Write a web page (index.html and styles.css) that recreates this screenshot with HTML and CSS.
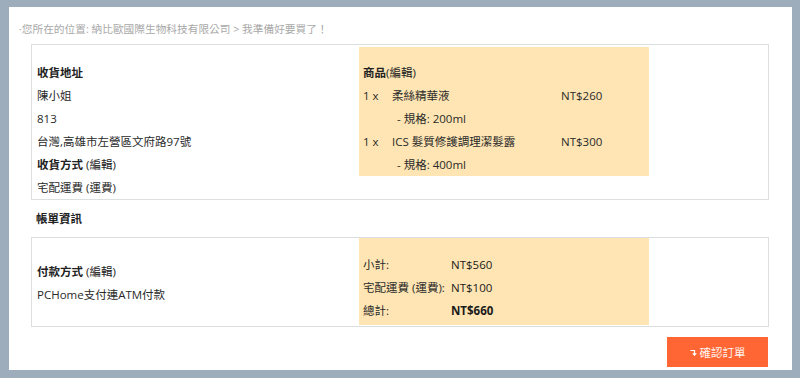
FILE: index.html
```html
<!DOCTYPE html>
<html lang="zh-Hant">
<head>
  <meta charset="UTF-8">
  <meta name="viewport" content="width=device-width, initial-scale=1.0">
  <title>我準備好要買了！</title>
  <link rel="stylesheet" href="styles.css">
</head>
<body>
  <div class="page">
    <div class="breadcrumb">·您所在的位置: 納比歐國際生物科技有限公司 &gt; 我準備好要買了！</div>

    <div class="order-box">
      <div class="info-col">
        <div class="label">收貨地址</div>
        <div>陳小姐</div>
        <div>813</div>
        <div>台灣,高雄市左營區文府路97號</div>
        <div class="label">收貨方式 <span class="normal">(編輯)</span></div>
        <div>宅配運費 (運費)</div>
      </div>
      <div class="summary">
        <div class="label">商品<span class="normal">(編輯)</span></div>
        <div class="item-row">
          <span>1 x</span>
          <span>柔絲精華液</span>
          <span>NT$260</span>
        </div>
        <div class="item-spec">- 規格: 200ml</div>
        <div class="item-row">
          <span>1 x</span>
          <span>ICS 髮質修護調理潔髮露</span>
          <span>NT$300</span>
        </div>
        <div class="item-spec">- 規格: 400ml</div>
      </div>
    </div>

    <div class="section-title">帳單資訊</div>

    <div class="order-box bill-box">
      <div class="info-col centered">
        <div class="label">付款方式 <span class="normal">(編輯)</span></div>
        <div>PCHome支付連ATM付款</div>
      </div>
      <div class="summary totals">
        <div class="total-row"><span>小計:</span><span class="amount">NT$560</span></div>
        <div class="total-row"><span>宅配運費 (運費):</span><span class="amount">NT$100</span></div>
        <div class="total-row"><span>總計:</span><span class="amount grand">NT$660</span></div>
      </div>
    </div>

    <div class="actions">
      <button class="confirm-btn">
        <svg width="7" height="7" viewBox="0 0 7 7"><path d="M0.5 1.5 H4.5 V6" fill="none" stroke="#fff" stroke-width="1.2"/><path d="M2.8 4.2 L4.5 6.3 L6.2 4.2" fill="none" stroke="#fff" stroke-width="1.1"/></svg>
        確認訂單
      </button>
    </div>
  </div>
</body>
</html>
```

FILE: styles.css
```css
body {
  margin: 0;
  background-color: #9eadbc;
  font-family: "Open Sans", "Noto Sans CJK TC", sans-serif;
  font-size: 11.5px;
  color: #2a2a2a;
}

.page {
  margin: 7px 8px 0 9px;
  height: 363px;
  background-color: #fff;
  padding: 0 23px 0 22px;
  box-sizing: border-box;
}

.breadcrumb {
  padding: 14px 0 0 10px;
  margin-left: -22px;
  height: 23px;
  line-height: 16px;
  font-size: 10.7px;
  color: #a8a8a8;
}

.order-box {
  display: flex;
  align-items: flex-start;
  border: 1px solid #dcdfe0;
  line-height: 23px;
}

.info-col {
  width: 322px;
  padding: 16px 0 0 5px;
}

.info-col.centered {
  align-self: center;
  padding-top: 2px;
}

.label {
  font-weight: bold;
  color: #222;
}

.normal {
  font-weight: normal;
}

.summary {
  width: 286px;
  margin-top: 2px;
  padding: 14px 0 0 4px;
  background-color: #fee5b3;
}

.item-row {
  display: grid;
  grid-template-columns: 29px 169px auto;
}

.item-spec {
  padding-left: 34px;
}

.bill-box {
  align-items: stretch;
  min-height: 88px;
}

.totals {
  margin: 0 0 1px;
  padding: 15px 0 2px 4px;
}

.total-row {
  display: grid;
  grid-template-columns: 88px auto;
}

.amount {
  color: #1a1a1a;
}

.grand {
  font-weight: bold;
}

.section-title {
  padding: 7px 5px 7px 5px;
  line-height: 23px;
  font-weight: bold;
  color: #222;
}

.actions {
  display: flex;
  justify-content: flex-end;
  padding: 10px 1px 0 0;
}

.confirm-btn {
  width: 101px;
  height: 30px;
  border: none;
  background-color: #ff6633;
  color: #fff3ee;
  font-family: "Open Sans", "Noto Sans CJK TC", sans-serif;
  font-size: 11.5px;
  cursor: pointer;
  display: flex;
  align-items: center;
  justify-content: center;
  gap: 3px;
}
```
